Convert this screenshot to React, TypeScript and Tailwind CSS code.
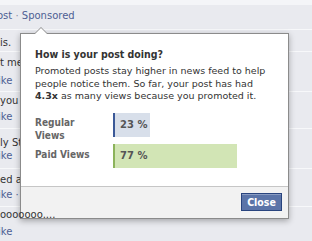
import React from "react";

const font = { fontFamily: '"DejaVu Sans", Verdana, sans-serif' };
const cond = { fontFamily: '"DejaVu Sans Condensed", "DejaVu Sans", Verdana, sans-serif' };

function Row({ h, children, last }: { h: string; children?: React.ReactNode; last?: boolean }) {
  return (
    <div className={`${h} relative flex flex-col ${last ? "" : "border-b border-[#f7f8fa]"}`}>{children}</div>
  );
}

export default function App() {
  return (
    <div className="relative w-[312px] h-[241px] overflow-hidden bg-[#e9eaef] text-[10px] text-[#333]" style={font}>
      {/* background feed */}
      <div className="flex flex-col">
        <div className="h-[5px] bg-[#f4f5f8]" />
        <Row h="h-[25px]">
          <div className="pt-[5px] leading-[12px] text-[#4e5f94] whitespace-nowrap -ml-[3px]">
            ost <span className="text-[#8a8fa0]">·</span> Sponsored
          </div>
        </Row>
        <Row h="h-[22px]">
          <div className="pt-[7px] leading-[12px] whitespace-nowrap">is.</div>
        </Row>
        <Row h="h-[40px]">
          <div className="pt-[5px] leading-[12px] whitespace-nowrap">t me</div>
          <div className="pt-[6px] leading-[12px] text-[#4e5f94] whitespace-nowrap -ml-[2px]">ike</div>
        </Row>
        <Row h="h-[37px]">
          <div className="pt-[3px] leading-[12px] whitespace-nowrap">you t</div>
          <div className="pt-[4px] leading-[12px] text-[#4e5f94] whitespace-nowrap -ml-[2px]">ike</div>
        </Row>
        <Row h="h-[40px]">
          <div className="pt-[8px] leading-[12px] whitespace-nowrap">ly St</div>
          <div className="pt-[1px] leading-[12px] text-[#4e5f94] whitespace-nowrap -ml-[2px]">ike</div>
        </Row>
        <Row h="h-[38px]">
          <div className="pt-[5px] leading-[12px] whitespace-nowrap">ed a</div>
          <div className="pt-[3px] leading-[12px] text-[#4e5f94] whitespace-nowrap -ml-[2px]">ike ·</div>
        </Row>
        <Row h="h-[35px]" last>
          <div className="pt-[2px] leading-[12px] whitespace-nowrap relative z-20">ooooooo....</div>
          <div className="pt-[5px] leading-[12px] text-[#4e5f94] whitespace-nowrap -ml-[2px]">ike</div>
        </Row>
      </div>

      {/* popup */}
      <div className="absolute left-[20px] top-[33px] w-[269px] h-[186px] z-10 bg-white border border-[#8b8b8b] shadow-[0_2px_6px_rgba(0,0,0,0.3)] flex flex-col">
        {/* arrow */}
        <div className="absolute -top-[7px] left-[13px] w-0 h-0 border-l-[7px] border-r-[7px] border-b-[7px] border-l-transparent border-r-transparent border-b-[#8b8b8b]" />
        <div className="absolute -top-[6px] left-[14px] w-0 h-0 border-l-[6px] border-r-[6px] border-b-[6px] border-l-transparent border-r-transparent border-b-white" />

        <div className="flex-1 pl-[14px] pr-[10px] pt-[14px]">
          <div className="font-bold text-[10.5px] leading-[13px] text-[#333]" style={cond}>How is your post doing?</div>
          <div className="mt-[4px] text-[9.5px] leading-[12.5px] text-[#333]">
            Promoted posts stay higher in news feed to help people notice them. So far, your post has had{" "}
            <span className="font-bold">4.3x</span> as many views because you promoted it.
          </div>

          <div className="mt-[10px] flex flex-col gap-[7px]">
            <div className="flex items-start h-[24px]">
              <div className="w-[78px] font-bold text-[#666] leading-[13px] pt-[3px]" style={cond}>
                Regular<br />Views
              </div>
              <div className="w-[161px]">
                <div className="h-[24px] w-[23%] bg-[#d8dfea] border-l-2 border-[#3b5998] flex items-center pl-[5px] font-bold text-[#555]">
                  23 %
                </div>
              </div>
            </div>
            <div className="flex items-start h-[24px]">
              <div className="w-[78px] font-bold text-[#666] leading-[13px] pt-[4px]" style={cond}>Paid Views</div>
              <div className="w-[161px]">
                <div className="h-[24px] w-[77%] bg-[#d2e5b5] border-l-2 border-[#8cb35b] flex items-center pl-[5px] font-bold text-[#555]">
                  77 %
                </div>
              </div>
            </div>
          </div>
        </div>

        <div className="h-[32px] border-t border-[#c6c6c6] bg-[#f2f2f2] flex items-start justify-end pr-[6px] pt-[6px]">
          <button className="w-[41px] h-[18px] bg-[#5b74a8] border border-[#29447e] text-white font-bold text-[10.5px] leading-[16px] shadow-[inset_0_1px_0_#8a9cc2]" style={cond}>
            Close
          </button>
        </div>
      </div>
    </div>
  );
}
